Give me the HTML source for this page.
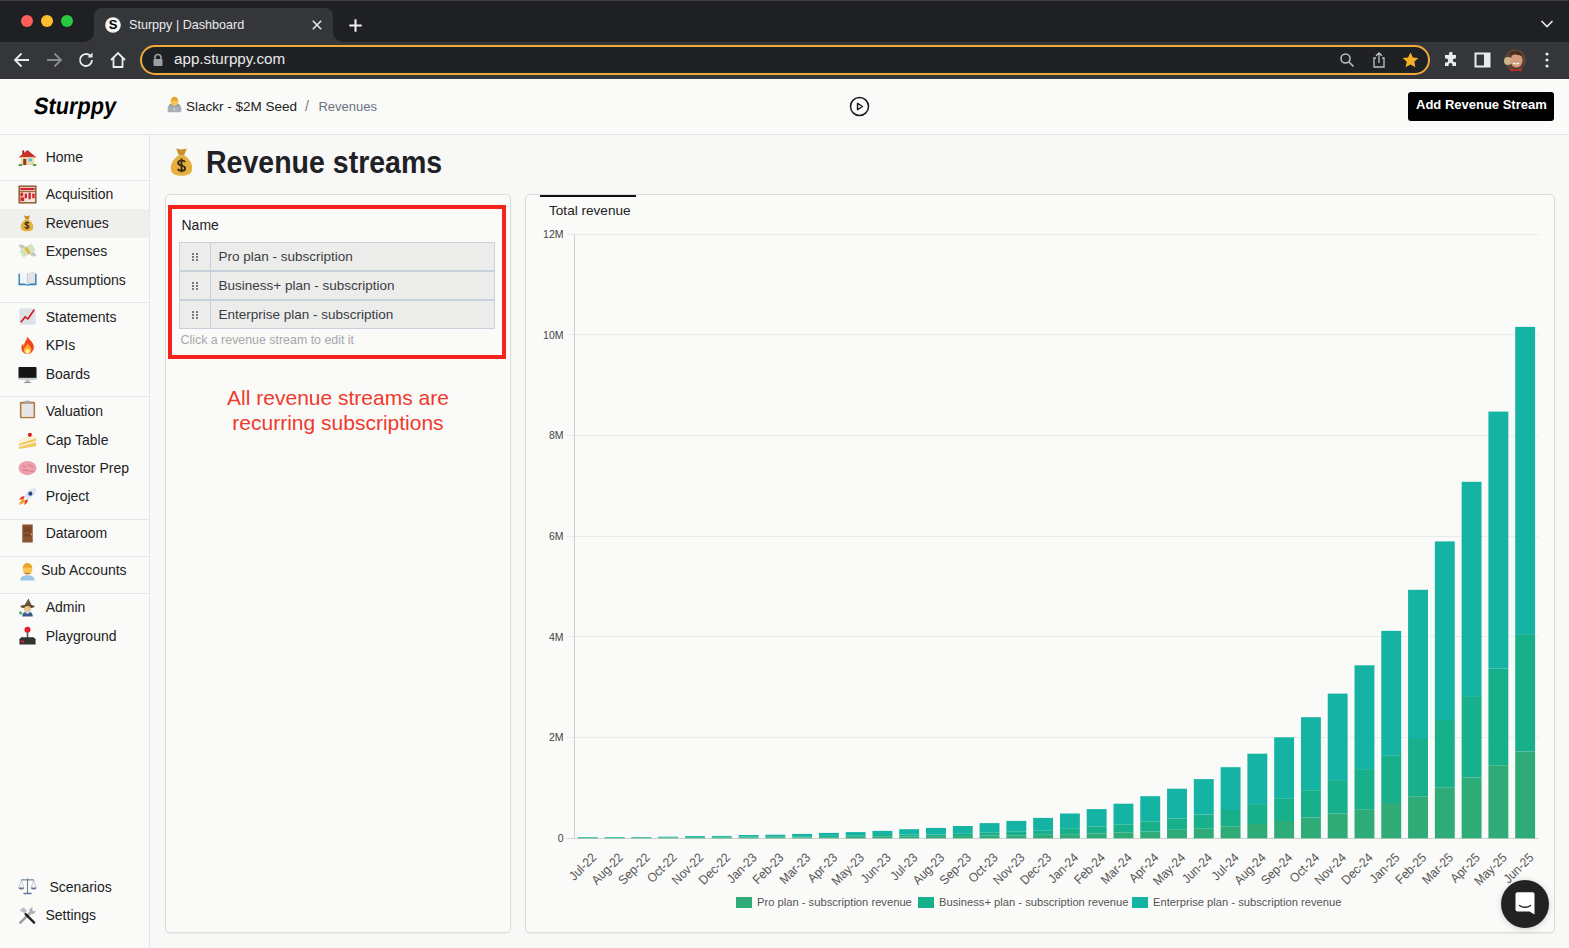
<!DOCTYPE html>
<html><head><meta charset="utf-8">
<style>
*{box-sizing:border-box;margin:0;padding:0}
html,body{width:1569px;height:948px;overflow:hidden;background:#f8f8f7;font-family:"Liberation Sans",sans-serif}
.abs{position:absolute}
#chrome{position:absolute;left:0;top:0;width:1569px;height:79px;background:#202124}
#tab{position:absolute;left:93.5px;top:8px;width:239px;height:40px;background:#35363a;border-radius:8px 8px 0 0}
#toolbar{position:absolute;left:0;top:42px;width:1569px;height:37px;background:#35363a}
#chromeline{position:absolute;left:0;top:0;width:1569px;height:1px;background:#3c3c3f}
.light{position:absolute;top:15px;width:12px;height:12px;border-radius:50%}
#url{position:absolute;left:140px;top:45px;width:1290px;height:30px;border:2px solid #f2a83b;border-radius:15px;background:#202124}
.ctext{position:absolute;color:#e8eaed;white-space:nowrap}
#header{position:absolute;left:0;top:79px;width:1569px;height:56px;background:#fafaf9;border-bottom:1px solid #e2e6ec}
#sidebar{position:absolute;left:0;top:135px;width:150px;height:813px;background:#fafaf9;border-right:1px solid #e2e6ec}
.nav{position:absolute;font-size:14px;color:#222;white-space:nowrap}
.div{position:absolute;left:0;width:149px;height:1px;background:#e2e6ec}
.emo{position:absolute;left:18px;width:18px;height:18px}
.card{position:absolute;background:#fafaf9;border:1px solid #dcdcda;border-radius:5px;box-shadow:0 1px 2px rgba(0,0,0,0.06)}
.rowt{font-size:13.5px;line-height:16px;color:#3a3d42;white-space:nowrap}
.legt{font-size:11.2px;line-height:14px;color:#555;white-space:nowrap}
</style></head><body>
<!-- browser chrome -->
<div id="chrome" style="background:#35363a"></div>
<div class="abs" style="left:0;top:0;width:93.5px;height:42px;background:#1f2023;border-radius:0 0 10px 0"></div>
<div class="abs" style="left:332.5px;top:0;width:1236.5px;height:42px;background:#1f2023;border-radius:0 0 0 10px"></div>
<div class="abs" style="left:80px;top:0;width:270px;height:18px;background:#1f2023"></div>
<div id="tab"></div>
<div id="toolbar"></div>
<div id="chromeline"></div>
<div class="light" style="left:21px;background:#fe5f57"></div>
<div class="light" style="left:41px;background:#febc2e"></div>
<div class="light" style="left:61px;background:#28c840"></div>
<div class="ctext" style="left:129px;top:17.8px;font-size:12.6px">Sturppy | Dashboard</div>
<div id="url"></div>
<div class="ctext" style="left:174px;top:50.2px;font-size:15.2px">app.sturppy.com</div>

<!-- header -->
<div id="header"></div>
<div class="abs" style="left:31.5px;top:92.5px;font-size:23.5px;font-weight:bold;color:#000;transform:skewX(-9deg) scaleX(0.925);transform-origin:0 100%;white-space:nowrap">Sturppy</div>
<div class="abs" style="left:186px;top:98.7px;font-size:13.5px;color:#222;white-space:nowrap">Slackr - $2M Seed</div>
<div class="abs" style="left:305px;top:98px;font-size:14px;color:#777">/</div>
<div class="abs" style="left:318.4px;top:98.7px;font-size:13px;color:#6b7280">Revenues</div>
<div class="abs" style="left:1408px;top:92px;width:146px;height:29px;background:#000;border-radius:3px"></div>
<div class="abs" style="left:1416px;top:97px;font-size:13px;font-weight:bold;color:#fff;white-space:nowrap">Add Revenue Stream</div>

<!-- sidebar -->
<div id="sidebar"></div>
<div class="abs" style="left:0;top:209px;width:149px;height:29px;background:#efefee"></div>
<div class="div" style="top:180px"></div>
<div class="div" style="top:302px"></div>
<div class="div" style="top:396px"></div>
<div class="div" style="top:519px"></div>
<div class="div" style="top:556px"></div>
<div class="div" style="top:593px"></div>
<div class="nav" style="left:45.7px;top:149.0px;line-height:16px">Home</div>
<div class="nav" style="left:45.7px;top:186.3px;line-height:16px">Acquisition</div>
<div class="nav" style="left:45.7px;top:214.8px;line-height:16px">Revenues</div>
<div class="nav" style="left:45.7px;top:243.1px;line-height:16px">Expenses</div>
<div class="nav" style="left:45.7px;top:271.6px;line-height:16px">Assumptions</div>
<div class="nav" style="left:45.7px;top:308.7px;line-height:16px">Statements</div>
<div class="nav" style="left:45.7px;top:337.1px;line-height:16px">KPIs</div>
<div class="nav" style="left:45.7px;top:366.1px;line-height:16px">Boards</div>
<div class="nav" style="left:45.7px;top:403.3px;line-height:16px">Valuation</div>
<div class="nav" style="left:45.7px;top:431.8px;line-height:16px">Cap Table</div>
<div class="nav" style="left:45.7px;top:460.2px;line-height:16px">Investor Prep</div>
<div class="nav" style="left:45.7px;top:488.1px;line-height:16px">Project</div>
<div class="nav" style="left:45.7px;top:525.1px;line-height:16px">Dataroom</div>
<div class="nav" style="left:41px;top:562.1px;line-height:16px">Sub Accounts</div>
<div class="nav" style="left:45.7px;top:599.1px;line-height:16px">Admin</div>
<div class="nav" style="left:45.7px;top:627.6px;line-height:16px">Playground</div>
<div class="nav" style="left:49.5px;top:879.3px;line-height:16px">Scenarios</div>
<div class="nav" style="left:45.5px;top:907.3px;line-height:16px">Settings</div>

<!-- main -->
<div class="abs" style="left:206px;top:144.5px;font-size:30.5px;font-weight:bold;color:#1f2125;white-space:nowrap;transform:scaleX(0.935);transform-origin:0 0">Revenue streams</div>
<div class="card" style="left:165px;top:194px;width:346px;height:739px"></div>
<div class="card" style="left:525px;top:194px;width:1030px;height:739px"></div>


<!-- left card content -->
<div class="abs" style="left:181.5px;top:217px;font-size:14px;line-height:16px;color:#1f1f1f">Name</div>
<div class="abs" style="left:179px;top:242px;width:316px;height:87px;border:1px solid #c8d0da;background:#ececeb"></div>
<div class="abs" style="left:179px;top:270px;width:316px;height:1.5px;background:#c8d0da"></div>
<div class="abs" style="left:179px;top:299px;width:316px;height:1.5px;background:#c8d0da"></div>
<div class="abs" style="left:210px;top:242px;width:1px;height:87px;background:#c8d0da"></div>
<div class="rowt abs" style="left:218.5px;top:248.5px">Pro plan - subscription</div>
<div class="rowt abs" style="left:218.5px;top:277.5px">Business+ plan - subscription</div>
<div class="rowt abs" style="left:218.5px;top:306.5px">Enterprise plan - subscription</div>
<svg class="abs" style="left:191px;top:251px" width="8" height="70" viewBox="0 0 8 70">
<g fill="#555">
<circle cx="2" cy="3" r="1"/><circle cx="6" cy="3" r="1"/><circle cx="2" cy="6" r="1"/><circle cx="6" cy="6" r="1"/><circle cx="2" cy="9" r="1"/><circle cx="6" cy="9" r="1"/>
<circle cx="2" cy="32" r="1"/><circle cx="6" cy="32" r="1"/><circle cx="2" cy="35" r="1"/><circle cx="6" cy="35" r="1"/><circle cx="2" cy="38" r="1"/><circle cx="6" cy="38" r="1"/>
<circle cx="2" cy="61" r="1"/><circle cx="6" cy="61" r="1"/><circle cx="2" cy="64" r="1"/><circle cx="6" cy="64" r="1"/><circle cx="2" cy="67" r="1"/><circle cx="6" cy="67" r="1"/>
</g></svg>
<div class="abs" style="left:180.5px;top:333px;font-size:12.4px;line-height:14px;color:#a8a8a8;white-space:nowrap">Click a revenue stream to edit it</div>
<div class="abs" style="left:168px;top:205px;width:338px;height:153.5px;border:4.6px solid #f5231b"></div>
<div class="abs" style="left:165px;top:385px;width:346px;text-align:center;font-size:21px;line-height:24.5px;color:#ee3a2c;padding-top:1px">All revenue streams are<br>recurring subscriptions</div>

<!-- chart card extras -->
<div class="abs" style="left:540px;top:194.5px;width:96px;height:2px;background:#111"></div>
<div class="abs" style="left:549px;top:203px;font-size:13.6px;line-height:16px;color:#222;white-space:nowrap">Total revenue</div>
<div class="abs" style="left:735.5px;top:897px;width:16px;height:11px;background:#2eab76"></div>
<div class="legt abs" style="left:757px;top:895px">Pro plan - subscription revenue</div>
<div class="abs" style="left:917.5px;top:897px;width:16px;height:11px;background:#17b08b"></div>
<div class="legt abs" style="left:939px;top:895px">Business+ plan - subscription revenue</div>
<div class="abs" style="left:1131.5px;top:897px;width:16px;height:11px;background:#15b3a4"></div>
<div class="legt abs" style="left:1153px;top:895px">Enterprise plan - subscription revenue</div>

<svg class="abs" style="left:18px;top:147.8px" width="19" height="19" viewBox="0 0 20 20"><path d="M4.5 2.5h2v4h-2z" fill="#9b2b25"/><path d="M0.5 10L10 2l9.5 8z" fill="#c9302c"/><rect x="3" y="9.5" width="14" height="8.5" fill="#efd9a8"/><rect x="5.5" y="11.5" width="3.2" height="6.5" fill="#8a3d1e"/><rect x="11" y="11" width="3.8" height="3" fill="#6cb4e4"/><ellipse cx="2.5" cy="18" rx="2.2" ry="1.2" fill="#4a9a3a"/><ellipse cx="17.5" cy="18" rx="2.2" ry="1.2" fill="#4a9a3a"/></svg>
<svg class="abs" style="left:18px;top:185.0px" width="19" height="19" viewBox="0 0 20 20"><rect x="0.5" y="0.5" width="19" height="19" fill="#8b5424"/><rect x="2" y="2" width="16" height="16" fill="#f3e6de"/><g fill="#d0262b"><rect x="2.5" y="3" width="15" height="2.5"/><rect x="2.5" y="8" width="3" height="4"/><rect x="7" y="9" width="2.5" height="5"/><rect x="11" y="8" width="2.5" height="7"/><rect x="15" y="9" width="2.5" height="5"/><rect x="2.5" y="13" width="4" height="4"/></g><rect x="2" y="6.5" width="16" height="1" fill="#8b5424"/></svg>
<svg class="abs" style="left:18px;top:214.2px" width="18" height="18" viewBox="0 0 20 20"><path d="M6.5 1.5c1.5 1 5.5 1 7 0l-1.8 4.5h-3.4z" fill="#c8912e"/><path d="M8.3 6h3.4c4 2.5 6 6.5 5 10c-.7 2.3-3 3.2-6.7 3.2s-6-0.9-6.7-3.2c-1-3.5 1-7.5 5-10z" fill="#e5b040"/><path d="M12.3 10.3c-.5-.8-1.3-1-2.3-1c-1.3 0-2.2.7-2.2 1.6c0 2.2 4.6 1.2 4.6 3.4c0 1-1 1.7-2.4 1.7c-1.2 0-2-.4-2.5-1.2M10 8v9" stroke="#3a2a10" stroke-width="1.2" fill="none"/></svg>
<svg class="abs" style="left:18px;top:241.3px" width="19" height="19" viewBox="0 0 20 20"><path d="M0.5 4.5c3-1.5 6-.5 7 2l-4 2.5z" fill="#c4c8c4"/><path d="M19.5 15.5c-3 1.5-6 .5-7-2l4-2.5z" fill="#c4c8c4"/><g transform="rotate(-32 10 10)"><rect x="2.5" y="6" width="15" height="8" fill="#d3e2bf"/><rect x="8.5" y="6" width="3" height="8" fill="#e3b53e"/></g></svg>
<svg class="abs" style="left:18px;top:269.3px" width="19" height="19" viewBox="0 0 20 20"><path d="M0.5 5h19v12h-7.5l-1.5 1-1.5-1H0.5z" fill="#2f7fb8"/><path d="M2 3.5c3-1 6.5 0 8 1.5v11.5c-1.5-1-4.5-1.5-8-1.2z" fill="#f4f4f4"/><path d="M18 3.5c-3-1-6.5 0-8 1.5v11.5c1.5-1 4.5-1.5 8-1.2z" fill="#e4e4e4"/></svg>
<svg class="abs" style="left:18px;top:307.0px" width="19" height="19" viewBox="0 0 20 20"><rect x="1.5" y="1.5" width="17" height="17" fill="#dde2e7"/><path d="M3 16l4.5-5.5 3 2L17 3" stroke="#cf1f27" stroke-width="1.8" fill="none"/></svg>
<svg class="abs" style="left:18px;top:335.8px" width="19" height="19" viewBox="0 0 20 20"><path d="M10 .5c1 3 5.5 5 6.5 9.5c1 5-2.5 9-6.5 9S3 15.5 3.7 11c.4-2 1.8-3 1.8-3c0 2 1 3.2 1 3.2C6 7 9 5 10 .5z" fill="#f0461c"/><path d="M10 7.5c1 2 4 3.8 4 7c0 2.8-2 4.3-4 4.3s-4-1.5-4-4.3C6 12 9 11 10 7.5z" fill="#fdae2e"/><ellipse cx="10" cy="16.3" rx="2.3" ry="2.5" fill="#fff1a8"/></svg>
<svg class="abs" style="left:18px;top:365.0px" width="19" height="19" viewBox="0 0 20 20"><rect x="0.5" y="2" width="19" height="12.5" rx=".8" fill="#161616"/><rect x="0.5" y="13.5" width="19" height="2.2" fill="#cfcfcf"/><rect x="8" y="15.7" width="4" height="2.5" fill="#bdbdbd"/><rect x="6.5" y="18" width="7" height="1" fill="#8a8a8a"/></svg>
<svg class="abs" style="left:18px;top:400.1px" width="19" height="19" viewBox="0 0 20 20"><rect x="2" y="1.8" width="16" height="17.5" rx="1.5" fill="#b07a42"/><rect x="3.6" y="3.8" width="12.8" height="14" fill="#e6e6e6"/><rect x="7" y="0.8" width="6" height="3" rx="1" fill="#a8a8a8"/></svg>
<svg class="abs" style="left:18px;top:430.7px" width="19" height="19" viewBox="0 0 20 20"><path d="M1 10.5L14.5 4l4.5 3.5v8.5L1 19z" fill="#f2c860"/><path d="M1 10.5L14.5 4l4.5 3.5L1 13.5z" fill="#fdf4dc"/><path d="M1 15.3l18-5v1.6L1 16.9z" fill="#fff3d6"/><circle cx="12.5" cy="4" r="2.2" fill="#d8262b"/></svg>
<svg class="abs" style="left:18px;top:458.5px" width="19" height="19" viewBox="0 0 20 20"><ellipse cx="10" cy="9.5" rx="9.5" ry="7.5" fill="#efa0ae"/><path d="M4 7c2 1 3 0 4.5 2M11 5.5c1 2 3 1 4.5 3M5 12c2-1 4 1 6.5 0M13 12.5c1 1 2.5 1 3.5 0" stroke="#c9677a" stroke-width="0.9" fill="none"/></svg>
<svg class="abs" style="left:18px;top:486.5px" width="19" height="19" viewBox="0 0 20 20"><path d="M19 1c-5.5 0-9.5 3-12 8.5l3.5 3.5C16 10.5 19 6.5 19 1z" fill="#dfe6ee"/><circle cx="13" cy="7" r="2.2" fill="#2a4a8a"/><path d="M7 9.5l-3.5 .8L1 13.5l5-1zM10.5 13l-.8 3.5L6.5 19l1-5z" fill="#e23a2a"/><path d="M5.5 12c-2.2 1-3.5 4-4.5 7 2.5-1 5.5-2 6.8-4.5z" fill="#f5a623"/></svg>
<svg class="abs" style="left:18px;top:524.0px" width="19" height="19" viewBox="0 0 20 20"><rect x="4.5" y="0.5" width="11" height="19" fill="#8a5530"/><rect x="6" y="2.5" width="8" height="6" fill="#7a4626"/><rect x="6" y="10.5" width="8" height="2.5" fill="#7a4626"/><circle cx="14.3" cy="11" r=".9" fill="#e6b93a"/></svg>
<svg class="abs" style="left:18px;top:561.5px" width="19" height="19" viewBox="0 0 20 20"><path d="M2.5 19.5c0-4 3-5.5 7.5-5.5s7.5 1.5 7.5 5.5z" fill="#9ac6ea"/><circle cx="10" cy="8.5" r="5" fill="#f6c555"/><path d="M4.8 7c0-3.5 2.3-6 5.2-6s5.2 2.5 5.2 6c-2.5-1.5-7.5-1.5-10.4 0z" fill="#e9a52c"/><path d="M7.5 11.5c1.5 1 3.5 1 5 0" stroke="#8a5a1a" stroke-width="1" fill="none"/></svg>
<svg class="abs" style="left:18px;top:598.0px" width="19" height="19" viewBox="0 0 20 20"><path d="M11 0.5l-5 8.5h9z" fill="#6b5540"/><ellipse cx="10" cy="9" rx="7.5" ry="1.8" fill="#5d4936"/><circle cx="10" cy="12" r="3.6" fill="#f1c27a"/><path d="M4.5 19.5c0-4 2.3-5 5.5-5s5.5 1 5.5 5z" fill="#3a5a8a"/><path d="M6.8 13c1 5 5.4 5 6.4 0z" fill="#cfd2d8"/><path d="M2 13.5l2.5 2-1 2.5-2.5-2z" fill="#4caf50"/></svg>
<svg class="abs" style="left:18px;top:625.5px" width="19" height="19" viewBox="0 0 20 20"><circle cx="10" cy="4" r="3.2" fill="#e0242a"/><rect x="9.2" y="6.5" width="1.6" height="7" fill="#555"/><path d="M1.5 14l2-2.2h13l2 2.2v5.5h-17z" fill="#333"/><rect x="3" y="15.5" width="3.5" height="1.8" fill="#e0242a"/></svg>
<svg class="abs" style="left:18px;top:877.3px" width="19" height="19" viewBox="0 0 20 20"><g stroke="#6b7f95" fill="none"><path d="M10 1.5v15.5" stroke-width="1.2"/><path d="M3.5 3h13" stroke-width="1.2"/><path d="M3.5 3L1 11M3.5 3L6 11M16.5 3L14 11M16.5 3L19 11" stroke-width=".4"/></g><path d="M.5 11h6c0 1.5-1.5 2.2-3 2.2s-3-.7-3-2.2zM13.5 11h6c0 1.5-1.5 2.2-3 2.2s-3-.7-3-2.2z" fill="#5e7896"/><rect x="5.5" y="16.5" width="9" height="1.6" rx=".8" fill="#5e7896"/></svg>
<svg class="abs" style="left:18px;top:905.8px" width="19" height="19" viewBox="0 0 20 20"><path d="M2.5 17.5L12 8" stroke="#9aa0a6" stroke-width="2.8" stroke-linecap="round"/><path d="M1.5 4.5l4.5-3 3.5 3.5-2.5 2.5z" fill="#b9bec4"/><path d="M8 8.5l9 9" stroke="#1e1e1e" stroke-width="2.4" stroke-linecap="round"/><path d="M15.5 1.5a3.5 3.5 0 0 0-3.5 4.5l-2 2 2.2 2.2 2-2a3.5 3.5 0 0 0 4.5-3.5l-2 1.2-1.8-1.8z" fill="#aeb3b9"/></svg>
<svg class="abs" style="left:165.5px;top:96px" width="17" height="17" viewBox="0 0 20 20"><path d="M3 13c0-3 3-5 7-5s7 2 7 5v5H3z" fill="#8a9aa8"/><circle cx="10" cy="7" r="4.5" fill="#f6c555"/><path d="M5.5 6c0-3 2-5 4.5-5s4.5 2 4.5 5c-2-1-6-1-9 0z" fill="#e9a52c"/><rect x="2" y="12" width="16" height="7" rx="1" fill="#a7b0b9"/><circle cx="10" cy="15.5" r=".9" fill="#eee"/></svg>
<svg class="abs" style="left:165.8px;top:146px" width="31" height="31" viewBox="0 0 20 20"><path d="M6.5 1.5c1.5 1 5.5 1 7 0l-1.8 4.5h-3.4z" fill="#c8912e"/><path d="M8.3 6h3.4c4 2.5 6 6.5 5 10c-.7 2.3-3 3.2-6.7 3.2s-6-0.9-6.7-3.2c-1-3.5 1-7.5 5-10z" fill="#e5b040"/><path d="M12.3 10.3c-.5-.8-1.3-1-2.3-1c-1.3 0-2.2.7-2.2 1.6c0 2.2 4.6 1.2 4.6 3.4c0 1-1 1.7-2.4 1.7c-1.2 0-2-.4-2.5-1.2M10 8v9" stroke="#3a2a10" stroke-width="1.2" fill="none"/></svg>

<!-- chrome icons -->
<svg class="abs" style="left:105px;top:17px" width="16" height="16" viewBox="0 0 16 16"><circle cx="8" cy="8" r="7.8" fill="#f4f4f4"/><text x="8" y="12.3" text-anchor="middle" font-family="Liberation Sans" font-weight="bold" font-size="13" fill="#000">S</text></svg>
<svg class="abs" style="left:311px;top:19px" width="12" height="12" viewBox="0 0 12 12"><path d="M1.8 1.8l8.4 8.4M10.2 1.8l-8.4 8.4" stroke="#e8eaed" stroke-width="1.5"/></svg>
<svg class="abs" style="left:347.5px;top:17.5px" width="15" height="15" viewBox="0 0 15 15"><path d="M7.5 1.3v12.4M1.3 7.5h12.4" stroke="#f4f4f4" stroke-width="2"/></svg>
<svg class="abs" style="left:1539px;top:18px" width="16" height="12" viewBox="0 0 16 12"><path d="M2.5 3l5.5 5.5L13.5 3" stroke="#e8eaed" stroke-width="1.6" fill="none"/></svg>
<svg class="abs" style="left:12px;top:50px" width="20" height="20" viewBox="0 0 20 20"><path d="M17 10H3.5M9.5 3.5L3 10l6.5 6.5" stroke="#e8eaed" stroke-width="1.8" fill="none"/></svg>
<svg class="abs" style="left:44px;top:50px" width="20" height="20" viewBox="0 0 20 20"><path d="M3 10h13.5M10.5 3.5L17 10l-6.5 6.5" stroke="#8a8b8e" stroke-width="1.8" fill="none"/></svg>
<svg class="abs" style="left:76px;top:50px" width="20" height="20" viewBox="0 0 20 20"><path d="M16 10a6 6 0 1 1-1.8-4.3" stroke="#e8eaed" stroke-width="1.8" fill="none"/><path d="M16.5 2.5v5h-5z" fill="#e8eaed"/></svg>
<svg class="abs" style="left:108px;top:50px" width="20" height="20" viewBox="0 0 20 20"><path d="M3 10L10 3l7 7M5.5 8v9h9V8" stroke="#e8eaed" stroke-width="1.8" fill="none" stroke-linejoin="miter"/></svg>
<svg class="abs" style="left:152px;top:53px" width="12" height="14" viewBox="0 0 12 14"><path d="M3 6V4.5a3 3 0 0 1 6 0V6" stroke="#9aa0a6" stroke-width="1.6" fill="none"/><rect x="1.5" y="6" width="9" height="7" rx="1" fill="#9aa0a6"/></svg>
<svg class="abs" style="left:1338px;top:51px" width="18" height="18" viewBox="0 0 18 18"><circle cx="7.5" cy="7.5" r="4.5" stroke="#bdc1c6" stroke-width="1.5" fill="none"/><path d="M11 11l4.5 4.5" stroke="#bdc1c6" stroke-width="1.6"/></svg>
<svg class="abs" style="left:1370px;top:51px" width="18" height="18" viewBox="0 0 18 18"><path d="M6 7H4v9h10V7h-2" stroke="#bdc1c6" stroke-width="1.3" fill="none"/><path d="M9 12V2M6 4.8L9 2l3 2.8" stroke="#bdc1c6" stroke-width="1.3" fill="none"/></svg>
<svg class="abs" style="left:1401px;top:51px" width="19" height="18" viewBox="0 0 19 18"><path d="M9.5 1.5l2.4 5 5.4.6-4 3.7 1.1 5.4-4.9-2.7-4.9 2.7 1.1-5.4-4-3.7 5.4-.6z" fill="#f6b026"/></svg>
<svg class="abs" style="left:1442px;top:51px" width="18" height="18" viewBox="0 0 18 18"><path d="M7 2.5a1.8 1.8 0 0 1 3.6 0V4H14v3.4h-1.2a1.9 1.9 0 0 0 0 3.8H14V15H10.4v-1.2a1.9 1.9 0 0 0-3.8 0V15H3v-3.6h1.3a1.9 1.9 0 0 0 0-3.8H3V4h4z" fill="#e8eaed"/></svg>
<svg class="abs" style="left:1474px;top:52px" width="17" height="16" viewBox="0 0 17 16"><rect x="1.5" y="1.5" width="14" height="13" stroke="#e8eaed" stroke-width="2" fill="none"/><rect x="10" y="1.5" width="5.5" height="13" fill="#e8eaed"/></svg>
<svg class="abs" style="left:1504px;top:49px" width="22" height="22" viewBox="0 0 22 22"><circle cx="11" cy="11" r="11" fill="#5a4236"/><circle cx="4" cy="12" r="4" fill="#c9b58a"/><ellipse cx="12.5" cy="11.5" rx="6" ry="7" fill="#d69a7c"/><path d="M5 6c2-5 12-5 13 1c-3-1-8-2-13-1z" fill="#4a2a1a"/><path d="M6 19c2 2 8 3 11 0l1 3H6z" fill="#d42a2a"/><path d="M9 14c1.5 1 4.5 1 6 0" stroke="#fff" stroke-width="1.2" fill="none"/></svg>
<svg class="abs" style="left:1543px;top:51px" width="8" height="18" viewBox="0 0 8 18"><circle cx="4" cy="3" r="1.6" fill="#e8eaed"/><circle cx="4" cy="9" r="1.6" fill="#e8eaed"/><circle cx="4" cy="15" r="1.6" fill="#e8eaed"/></svg>
<!-- play icon -->
<svg class="abs" style="left:849px;top:96px" width="21" height="21" viewBox="0 0 21 21"><circle cx="10.5" cy="10.5" r="9" stroke="#1a1a1a" stroke-width="1.5" fill="none"/><path d="M8.5 7.3v6.4l5-3.2z" stroke="#1a1a1a" stroke-width="1.4" fill="none" stroke-linejoin="round"/></svg>
<!-- chat button -->
<div class="abs" style="left:1501px;top:880px;width:48px;height:48px;border-radius:50%;background:#222;box-shadow:0 1px 6px rgba(0,0,0,0.18)"></div>
<svg class="abs" style="left:1513px;top:891px" width="24" height="26" viewBox="0 0 24 26"><path d="M2.5 3.2a2 2 0 0 1 2-2h15a2 2 0 0 1 2 2V23.5l-5-3H4.5a2 2 0 0 1-2-2z" fill="#fff"/><path d="M6.5 14.5c3 2.3 8 2.3 11 0" stroke="#222" stroke-width="1.3" fill="none" stroke-linecap="round"/></svg>

<svg width="1569" height="948" style="position:absolute;left:0;top:0">
<line x1="566.8" y1="234.5" x2="1538.5" y2="234.5" stroke="#ebebe9" stroke-width="1"/>
<line x1="566.8" y1="334.5" x2="1538.5" y2="334.5" stroke="#ebebe9" stroke-width="1"/>
<line x1="566.8" y1="435.5" x2="1538.5" y2="435.5" stroke="#ebebe9" stroke-width="1"/>
<line x1="566.8" y1="536.5" x2="1538.5" y2="536.5" stroke="#ebebe9" stroke-width="1"/>
<line x1="566.8" y1="636.5" x2="1538.5" y2="636.5" stroke="#ebebe9" stroke-width="1"/>
<line x1="566.8" y1="737.5" x2="1538.5" y2="737.5" stroke="#ebebe9" stroke-width="1"/>
<line x1="574.5" y1="234" x2="574.5" y2="839" stroke="#d0d0ce" stroke-width="1"/>
<line x1="566.8" y1="838.5" x2="1538.5" y2="838.5" stroke="#d0d0ce" stroke-width="1"/>
<text x="563.5" y="238.1" text-anchor="end" font-family="Liberation Sans" font-size="10.5" fill="#444">12M</text>
<text x="563.5" y="338.8" text-anchor="end" font-family="Liberation Sans" font-size="10.5" fill="#444">10M</text>
<text x="563.5" y="439.4" text-anchor="end" font-family="Liberation Sans" font-size="10.5" fill="#444">8M</text>
<text x="563.5" y="540.1" text-anchor="end" font-family="Liberation Sans" font-size="10.5" fill="#444">6M</text>
<text x="563.5" y="640.8" text-anchor="end" font-family="Liberation Sans" font-size="10.5" fill="#444">4M</text>
<text x="563.5" y="741.4" text-anchor="end" font-family="Liberation Sans" font-size="10.5" fill="#444">2M</text>
<text x="563.5" y="842.1" text-anchor="end" font-family="Liberation Sans" font-size="10.5" fill="#444">0</text>
<rect x="577.90" y="837.90" width="19.9" height="0.40" fill="#2eab76"/>
<rect x="577.90" y="837.60" width="19.9" height="0.30" fill="#17b08b"/>
<rect x="577.90" y="837.00" width="19.9" height="0.60" fill="#15b3a4"/>
<text transform="translate(597.1,858.3) rotate(-45) scale(0.93,1)" text-anchor="end" font-family="Liberation Sans" font-size="12.8" fill="#555">Jul-22</text>
<rect x="604.68" y="837.90" width="19.9" height="0.40" fill="#2eab76"/>
<rect x="604.68" y="837.60" width="19.9" height="0.30" fill="#17b08b"/>
<rect x="604.68" y="837.00" width="19.9" height="0.60" fill="#15b3a4"/>
<text transform="translate(623.8,858.3) rotate(-45) scale(0.93,1)" text-anchor="end" font-family="Liberation Sans" font-size="12.8" fill="#555">Aug-22</text>
<rect x="631.46" y="837.90" width="19.9" height="0.40" fill="#2eab76"/>
<rect x="631.46" y="837.60" width="19.9" height="0.30" fill="#17b08b"/>
<rect x="631.46" y="837.00" width="19.9" height="0.60" fill="#15b3a4"/>
<text transform="translate(650.6,858.3) rotate(-45) scale(0.93,1)" text-anchor="end" font-family="Liberation Sans" font-size="12.8" fill="#555">Sep-22</text>
<rect x="658.24" y="837.80" width="19.9" height="0.50" fill="#2eab76"/>
<rect x="658.24" y="837.30" width="19.9" height="0.50" fill="#17b08b"/>
<rect x="658.24" y="836.70" width="19.9" height="0.60" fill="#15b3a4"/>
<text transform="translate(677.4,858.3) rotate(-45) scale(0.93,1)" text-anchor="end" font-family="Liberation Sans" font-size="12.8" fill="#555">Oct-22</text>
<rect x="685.02" y="837.60" width="19.9" height="0.70" fill="#2eab76"/>
<rect x="685.02" y="837.00" width="19.9" height="0.60" fill="#17b08b"/>
<rect x="685.02" y="836.10" width="19.9" height="0.90" fill="#15b3a4"/>
<text transform="translate(704.2,858.3) rotate(-45) scale(0.93,1)" text-anchor="end" font-family="Liberation Sans" font-size="12.8" fill="#555">Nov-22</text>
<rect x="711.80" y="837.50" width="19.9" height="0.80" fill="#2eab76"/>
<rect x="711.80" y="836.80" width="19.9" height="0.70" fill="#17b08b"/>
<rect x="711.80" y="835.90" width="19.9" height="0.90" fill="#15b3a4"/>
<text transform="translate(731.0,858.3) rotate(-45) scale(0.93,1)" text-anchor="end" font-family="Liberation Sans" font-size="12.8" fill="#555">Dec-22</text>
<rect x="738.58" y="837.40" width="19.9" height="0.90" fill="#2eab76"/>
<rect x="738.58" y="836.50" width="19.9" height="0.90" fill="#17b08b"/>
<rect x="738.58" y="835.00" width="19.9" height="1.50" fill="#15b3a4"/>
<text transform="translate(757.7,858.3) rotate(-45) scale(0.93,1)" text-anchor="end" font-family="Liberation Sans" font-size="12.8" fill="#555">Jan-23</text>
<rect x="765.36" y="837.30" width="19.9" height="1.00" fill="#2eab76"/>
<rect x="765.36" y="836.30" width="19.9" height="1.00" fill="#17b08b"/>
<rect x="765.36" y="834.70" width="19.9" height="1.60" fill="#15b3a4"/>
<text transform="translate(784.5,858.3) rotate(-45) scale(0.93,1)" text-anchor="end" font-family="Liberation Sans" font-size="12.8" fill="#555">Feb-23</text>
<rect x="792.14" y="837.50" width="19.9" height="0.80" fill="#2eab76"/>
<rect x="792.14" y="836.30" width="19.9" height="1.20" fill="#17b08b"/>
<rect x="792.14" y="833.90" width="19.9" height="2.40" fill="#15b3a4"/>
<text transform="translate(811.3,858.3) rotate(-45) scale(0.93,1)" text-anchor="end" font-family="Liberation Sans" font-size="12.8" fill="#555">Mar-23</text>
<rect x="818.92" y="837.30" width="19.9" height="1.00" fill="#2eab76"/>
<rect x="818.92" y="835.80" width="19.9" height="1.50" fill="#17b08b"/>
<rect x="818.92" y="832.90" width="19.9" height="2.90" fill="#15b3a4"/>
<text transform="translate(838.1,858.3) rotate(-45) scale(0.93,1)" text-anchor="end" font-family="Liberation Sans" font-size="12.8" fill="#555">Apr-23</text>
<rect x="845.70" y="836.80" width="19.9" height="1.50" fill="#2eab76"/>
<rect x="845.70" y="835.20" width="19.9" height="1.60" fill="#17b08b"/>
<rect x="845.70" y="832.10" width="19.9" height="3.10" fill="#15b3a4"/>
<text transform="translate(864.9,858.3) rotate(-45) scale(0.93,1)" text-anchor="end" font-family="Liberation Sans" font-size="12.8" fill="#555">May-23</text>
<rect x="872.48" y="836.30" width="19.9" height="2.00" fill="#2eab76"/>
<rect x="872.48" y="835.00" width="19.9" height="1.30" fill="#17b08b"/>
<rect x="872.48" y="830.90" width="19.9" height="4.10" fill="#15b3a4"/>
<text transform="translate(891.6,858.3) rotate(-45) scale(0.93,1)" text-anchor="end" font-family="Liberation Sans" font-size="12.8" fill="#555">Jun-23</text>
<rect x="899.26" y="836.40" width="19.9" height="1.90" fill="#2eab76"/>
<rect x="899.26" y="834.60" width="19.9" height="1.80" fill="#17b08b"/>
<rect x="899.26" y="829.20" width="19.9" height="5.40" fill="#15b3a4"/>
<text transform="translate(918.4,858.3) rotate(-45) scale(0.93,1)" text-anchor="end" font-family="Liberation Sans" font-size="12.8" fill="#555">Jul-23</text>
<rect x="926.04" y="836.10" width="19.9" height="2.20" fill="#2eab76"/>
<rect x="926.04" y="834.40" width="19.9" height="1.70" fill="#17b08b"/>
<rect x="926.04" y="827.90" width="19.9" height="6.50" fill="#15b3a4"/>
<text transform="translate(945.2,858.3) rotate(-45) scale(0.93,1)" text-anchor="end" font-family="Liberation Sans" font-size="12.8" fill="#555">Aug-23</text>
<rect x="952.82" y="836.10" width="19.9" height="2.20" fill="#2eab76"/>
<rect x="952.82" y="833.20" width="19.9" height="2.90" fill="#17b08b"/>
<rect x="952.82" y="826.00" width="19.9" height="7.20" fill="#15b3a4"/>
<text transform="translate(972.0,858.3) rotate(-45) scale(0.93,1)" text-anchor="end" font-family="Liberation Sans" font-size="12.8" fill="#555">Sep-23</text>
<rect x="979.60" y="835.60" width="19.9" height="2.70" fill="#2eab76"/>
<rect x="979.60" y="832.30" width="19.9" height="3.30" fill="#17b08b"/>
<rect x="979.60" y="823.10" width="19.9" height="9.20" fill="#15b3a4"/>
<text transform="translate(998.8,858.3) rotate(-45) scale(0.93,1)" text-anchor="end" font-family="Liberation Sans" font-size="12.8" fill="#555">Oct-23</text>
<rect x="1006.38" y="835.40" width="19.9" height="2.90" fill="#2eab76"/>
<rect x="1006.38" y="831.30" width="19.9" height="4.10" fill="#17b08b"/>
<rect x="1006.38" y="820.90" width="19.9" height="10.40" fill="#15b3a4"/>
<text transform="translate(1025.5,858.3) rotate(-45) scale(0.93,1)" text-anchor="end" font-family="Liberation Sans" font-size="12.8" fill="#555">Nov-23</text>
<rect x="1033.16" y="834.80" width="19.9" height="3.50" fill="#2eab76"/>
<rect x="1033.16" y="830.30" width="19.9" height="4.50" fill="#17b08b"/>
<rect x="1033.16" y="817.90" width="19.9" height="12.40" fill="#15b3a4"/>
<text transform="translate(1052.3,858.3) rotate(-45) scale(0.93,1)" text-anchor="end" font-family="Liberation Sans" font-size="12.8" fill="#555">Dec-23</text>
<rect x="1059.94" y="834.20" width="19.9" height="4.10" fill="#2eab76"/>
<rect x="1059.94" y="828.20" width="19.9" height="6.00" fill="#17b08b"/>
<rect x="1059.94" y="813.50" width="19.9" height="14.70" fill="#15b3a4"/>
<text transform="translate(1079.1,858.3) rotate(-45) scale(0.93,1)" text-anchor="end" font-family="Liberation Sans" font-size="12.8" fill="#555">Jan-24</text>
<rect x="1086.72" y="833.40" width="19.9" height="4.90" fill="#2eab76"/>
<rect x="1086.72" y="826.30" width="19.9" height="7.10" fill="#17b08b"/>
<rect x="1086.72" y="809.10" width="19.9" height="17.20" fill="#15b3a4"/>
<text transform="translate(1105.9,858.3) rotate(-45) scale(0.93,1)" text-anchor="end" font-family="Liberation Sans" font-size="12.8" fill="#555">Feb-24</text>
<rect x="1113.50" y="832.40" width="19.9" height="5.90" fill="#2eab76"/>
<rect x="1113.50" y="824.30" width="19.9" height="8.10" fill="#17b08b"/>
<rect x="1113.50" y="803.70" width="19.9" height="20.60" fill="#15b3a4"/>
<text transform="translate(1132.7,858.3) rotate(-45) scale(0.93,1)" text-anchor="end" font-family="Liberation Sans" font-size="12.8" fill="#555">Mar-24</text>
<rect x="1140.28" y="831.40" width="19.9" height="6.90" fill="#2eab76"/>
<rect x="1140.28" y="821.30" width="19.9" height="10.10" fill="#17b08b"/>
<rect x="1140.28" y="796.20" width="19.9" height="25.10" fill="#15b3a4"/>
<text transform="translate(1159.4,858.3) rotate(-45) scale(0.93,1)" text-anchor="end" font-family="Liberation Sans" font-size="12.8" fill="#555">Apr-24</text>
<rect x="1167.06" y="829.80" width="19.9" height="8.50" fill="#2eab76"/>
<rect x="1167.06" y="818.40" width="19.9" height="11.40" fill="#17b08b"/>
<rect x="1167.06" y="788.70" width="19.9" height="29.70" fill="#15b3a4"/>
<text transform="translate(1186.2,858.3) rotate(-45) scale(0.93,1)" text-anchor="end" font-family="Liberation Sans" font-size="12.8" fill="#555">May-24</text>
<rect x="1193.84" y="828.30" width="19.9" height="10.00" fill="#2eab76"/>
<rect x="1193.84" y="814.50" width="19.9" height="13.80" fill="#17b08b"/>
<rect x="1193.84" y="779.10" width="19.9" height="35.40" fill="#15b3a4"/>
<text transform="translate(1213.0,858.3) rotate(-45) scale(0.93,1)" text-anchor="end" font-family="Liberation Sans" font-size="12.8" fill="#555">Jun-24</text>
<rect x="1220.62" y="826.30" width="19.9" height="12.00" fill="#2eab76"/>
<rect x="1220.62" y="810.00" width="19.9" height="16.30" fill="#17b08b"/>
<rect x="1220.62" y="767.20" width="19.9" height="42.80" fill="#15b3a4"/>
<text transform="translate(1239.8,858.3) rotate(-45) scale(0.93,1)" text-anchor="end" font-family="Liberation Sans" font-size="12.8" fill="#555">Jul-24</text>
<rect x="1247.40" y="824.00" width="19.9" height="14.30" fill="#2eab76"/>
<rect x="1247.40" y="804.10" width="19.9" height="19.90" fill="#17b08b"/>
<rect x="1247.40" y="753.70" width="19.9" height="50.40" fill="#15b3a4"/>
<text transform="translate(1266.6,858.3) rotate(-45) scale(0.93,1)" text-anchor="end" font-family="Liberation Sans" font-size="12.8" fill="#555">Aug-24</text>
<rect x="1274.18" y="821.00" width="19.9" height="17.30" fill="#2eab76"/>
<rect x="1274.18" y="798.20" width="19.9" height="22.80" fill="#17b08b"/>
<rect x="1274.18" y="737.30" width="19.9" height="60.90" fill="#15b3a4"/>
<text transform="translate(1293.3,858.3) rotate(-45) scale(0.93,1)" text-anchor="end" font-family="Liberation Sans" font-size="12.8" fill="#555">Sep-24</text>
<rect x="1300.96" y="817.40" width="19.9" height="20.90" fill="#2eab76"/>
<rect x="1300.96" y="790.20" width="19.9" height="27.20" fill="#17b08b"/>
<rect x="1300.96" y="717.20" width="19.9" height="73.00" fill="#15b3a4"/>
<text transform="translate(1320.1,858.3) rotate(-45) scale(0.93,1)" text-anchor="end" font-family="Liberation Sans" font-size="12.8" fill="#555">Oct-24</text>
<rect x="1327.74" y="813.40" width="19.9" height="24.90" fill="#2eab76"/>
<rect x="1327.74" y="780.10" width="19.9" height="33.30" fill="#17b08b"/>
<rect x="1327.74" y="693.60" width="19.9" height="86.50" fill="#15b3a4"/>
<text transform="translate(1346.9,858.3) rotate(-45) scale(0.93,1)" text-anchor="end" font-family="Liberation Sans" font-size="12.8" fill="#555">Nov-24</text>
<rect x="1354.52" y="809.20" width="19.9" height="29.10" fill="#2eab76"/>
<rect x="1354.52" y="769.10" width="19.9" height="40.10" fill="#17b08b"/>
<rect x="1354.52" y="665.30" width="19.9" height="103.80" fill="#15b3a4"/>
<text transform="translate(1373.7,858.3) rotate(-45) scale(0.93,1)" text-anchor="end" font-family="Liberation Sans" font-size="12.8" fill="#555">Dec-24</text>
<rect x="1381.30" y="803.00" width="19.9" height="35.30" fill="#2eab76"/>
<rect x="1381.30" y="755.20" width="19.9" height="47.80" fill="#17b08b"/>
<rect x="1381.30" y="630.90" width="19.9" height="124.30" fill="#15b3a4"/>
<text transform="translate(1400.5,858.3) rotate(-45) scale(0.93,1)" text-anchor="end" font-family="Liberation Sans" font-size="12.8" fill="#555">Jan-25</text>
<rect x="1408.08" y="796.30" width="19.9" height="42.00" fill="#2eab76"/>
<rect x="1408.08" y="739.00" width="19.9" height="57.30" fill="#17b08b"/>
<rect x="1408.08" y="589.80" width="19.9" height="149.20" fill="#15b3a4"/>
<text transform="translate(1427.2,858.3) rotate(-45) scale(0.93,1)" text-anchor="end" font-family="Liberation Sans" font-size="12.8" fill="#555">Feb-25</text>
<rect x="1434.86" y="787.70" width="19.9" height="50.60" fill="#2eab76"/>
<rect x="1434.86" y="720.00" width="19.9" height="67.70" fill="#17b08b"/>
<rect x="1434.86" y="541.40" width="19.9" height="178.60" fill="#15b3a4"/>
<text transform="translate(1454.0,858.3) rotate(-45) scale(0.93,1)" text-anchor="end" font-family="Liberation Sans" font-size="12.8" fill="#555">Mar-25</text>
<rect x="1461.64" y="777.40" width="19.9" height="60.90" fill="#2eab76"/>
<rect x="1461.64" y="696.10" width="19.9" height="81.30" fill="#17b08b"/>
<rect x="1461.64" y="481.80" width="19.9" height="214.30" fill="#15b3a4"/>
<text transform="translate(1480.8,858.3) rotate(-45) scale(0.93,1)" text-anchor="end" font-family="Liberation Sans" font-size="12.8" fill="#555">Apr-25</text>
<rect x="1488.42" y="765.30" width="19.9" height="73.00" fill="#2eab76"/>
<rect x="1488.42" y="668.40" width="19.9" height="96.90" fill="#17b08b"/>
<rect x="1488.42" y="411.60" width="19.9" height="256.80" fill="#15b3a4"/>
<text transform="translate(1507.6,858.3) rotate(-45) scale(0.93,1)" text-anchor="end" font-family="Liberation Sans" font-size="12.8" fill="#555">May-25</text>
<rect x="1515.20" y="751.40" width="19.9" height="86.90" fill="#2eab76"/>
<rect x="1515.20" y="634.10" width="19.9" height="117.30" fill="#17b08b"/>
<rect x="1515.20" y="326.90" width="19.9" height="307.20" fill="#15b3a4"/>
<text transform="translate(1534.4,858.3) rotate(-45) scale(0.93,1)" text-anchor="end" font-family="Liberation Sans" font-size="12.8" fill="#555">Jun-25</text>
</svg>
</body></html>
